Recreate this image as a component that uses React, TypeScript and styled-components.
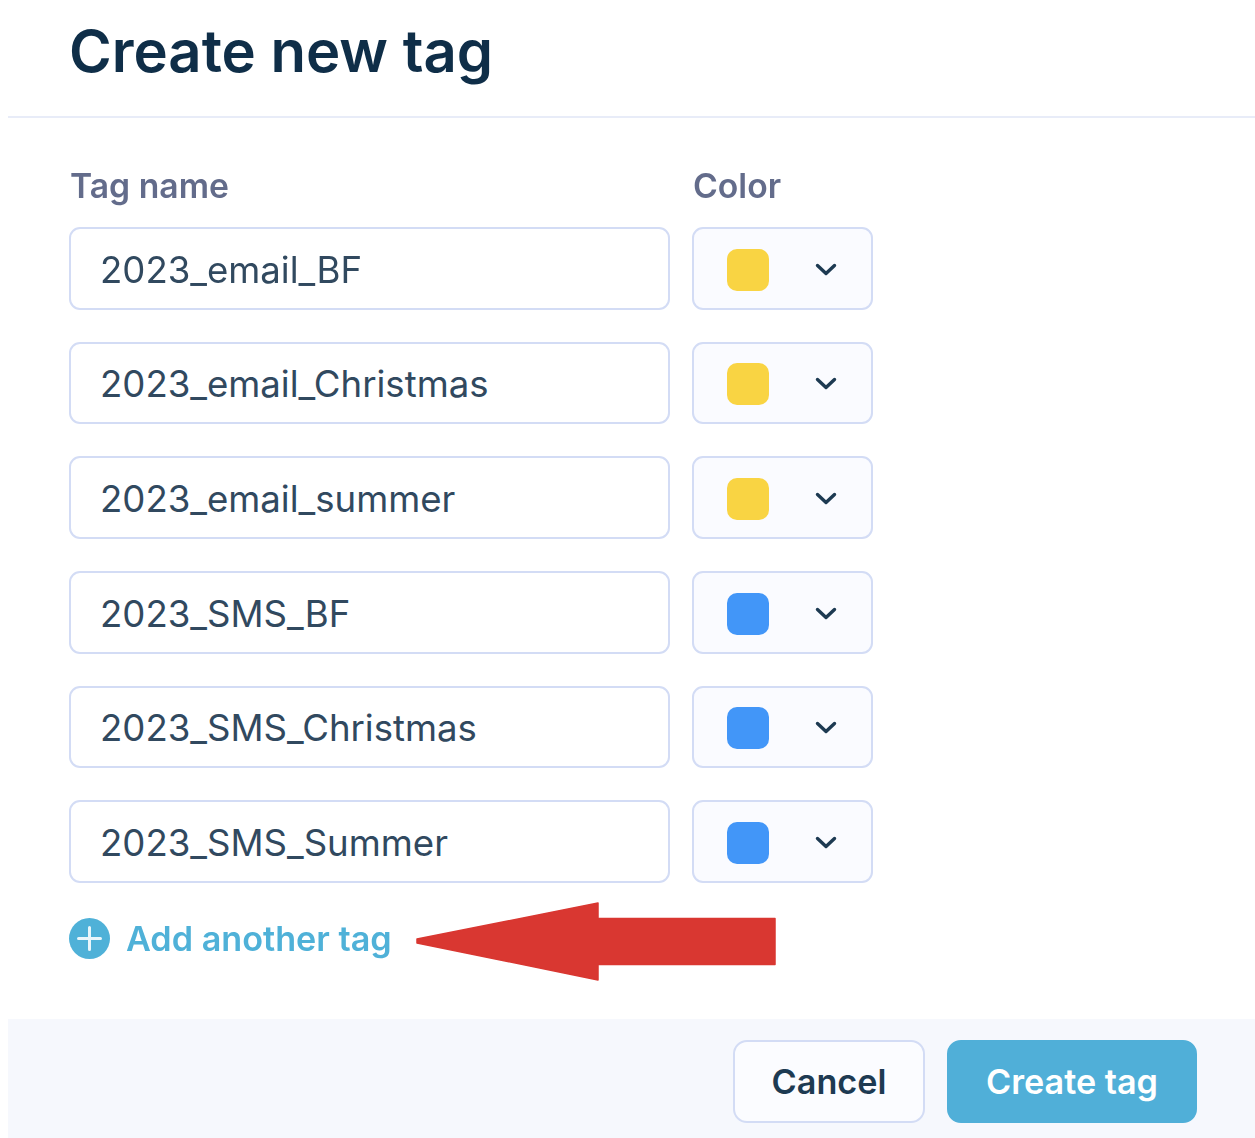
import React from "react";
import styled, { createGlobalStyle } from "styled-components";

const GlobalStyle = createGlobalStyle`
  html, body {
    margin: 0;
    padding: 0;
    background: #ffffff;
  }
  body {
    font-family: Inter, "Liberation Sans", sans-serif;
  }
`;

const Page = styled.div`
  width: 1255px;
  height: 1138px;
  padding-left: 8px;
  box-sizing: border-box;
  overflow: hidden;
  filter: blur(0.5px);
`;

const Header = styled.header`
  height: 118px;
  box-sizing: border-box;
  padding-left: 61px;
  border-bottom: 2px solid #e8ecf8;
  display: flex;
  align-items: center;
`;

const Title = styled.h1`
  margin: 0 0 14px;
  font-size: 58px;
  line-height: 68px;
  font-weight: 600;
  color: #0f2e48;
`;

const Body = styled.div`
  height: 901px;
  box-sizing: border-box;
  padding: 48px 0 0 61px;
`;

const Grid = styled.div`
  display: grid;
  grid-template-columns: 601px 181px;
  column-gap: 22px;
  row-gap: 32px;
  align-items: stretch;
`;

const Label = styled.div`
  margin: 0 0 -11px 1px;
  height: 40px;
  line-height: 40px;
  font-size: 33.7px;
  font-weight: 600;
  color: #636c8b;
`;

const TextBox = styled.div`
  height: 82.67px;
  box-sizing: border-box;
  border: 2px solid #d3dcf5;
  border-radius: 11px;
  padding: 3px 0 0 29px;
  display: flex;
  align-items: center;
  font-size: 36.6px;
  color: #31495f;
  background: #ffffff;
`;

const ColorSelect = styled.div`
  height: 82.67px;
  box-sizing: border-box;
  border: 2px solid #d3dcf5;
  border-radius: 11px;
  padding: 3px 0 0 33px;
  display: flex;
  align-items: center;
  background: #fafbff;
`;

const Swatch = styled.span<{ $color: string }>`
  width: 42px;
  height: 42px;
  border-radius: 10px;
  background: ${(p) => p.$color};
`;

const Chevron = styled.svg`
  width: 24px;
  height: 24px;
  margin-left: 45px;
  color: #1d3a52;
`;

const AddRow = styled.div`
  display: flex;
  align-items: center;
  height: 78px;
  margin-top: 17px;
`;

const AddIcon = styled.svg`
  width: 41px;
  height: 41px;
  flex: none;
`;

const AddText = styled.span`
  margin-left: 16px;
  font-size: 34.2px;
  font-weight: 600;
  color: #4fb1d8;
`;

const Arrow = styled.svg`
  width: 361px;
  height: 79px;
  margin: 5px 0 0 24px;
  flex: none;
`;

const Footer = styled.footer`
  height: 119px;
  box-sizing: border-box;
  background: #f6f8fd;
  padding: 21px 58px 0 0;
  display: flex;
  justify-content: flex-end;
  align-items: flex-start;
  gap: 22px;
`;

const Button = styled.button<{ $primary?: boolean }>`
  height: 83px;
  width: ${(p) => (p.$primary ? "250px" : "192px")};
  box-sizing: border-box;
  border-radius: 14px;
  border: 2px solid ${(p) => (p.$primary ? "#50afd8" : "#d3dcf5")};
  background: ${(p) => (p.$primary ? "#50afd8" : "#fbfcff")};
  color: ${(p) => (p.$primary ? "#ffffff" : "#1d3a52")};
  font-family: inherit;
  font-size: 34.2px;
  font-weight: 600;
  padding: 0;
`;

const tags = [
  { name: "2023_email_BF", color: "#f9d443" },
  { name: "2023_email_Christmas", color: "#f9d443" },
  { name: "2023_email_summer", color: "#f9d443" },
  { name: "2023_SMS_BF", color: "#4296f8" },
  { name: "2023_SMS_Christmas", color: "#4296f8" },
  { name: "2023_SMS_Summer", color: "#4296f8" },
];

export default function App() {
  return (
    <Page>
      <GlobalStyle />
      <Header>
        <Title>Create new tag</Title>
      </Header>
      <Body>
        <Grid>
          <Label>Tag name</Label>
          <Label>Color</Label>
          {tags.map((tag) => (
            <React.Fragment key={tag.name}>
              <TextBox>{tag.name}</TextBox>
              <ColorSelect>
                <Swatch $color={tag.color} />
                <Chevron viewBox="0 0 24 24" fill="none">
                  <path d="M3.500 7.500 12 15.500l8.500-8" stroke="currentColor" strokeWidth="3.400" strokeLinecap="round" strokeLinejoin="round" />
                </Chevron>
              </ColorSelect>
            </React.Fragment>
          ))}
        </Grid>
        <AddRow>
          <AddIcon viewBox="0 0 41 41">
            <circle cx="20.500" cy="20.500" r="20.500" fill="#4fb1d8" />
            <path d="M20.500 9.500v22M9.500 20.500h22" stroke="#eaf6fb" strokeWidth="3" strokeLinecap="round" />
          </AddIcon>
          <AddText>Add another tag</AddText>
          <Arrow viewBox="0 0 361 79">
            <path d="M1 37 182 1v15.500h177v46H182V78L1 41z" fill="#d93731" stroke="#d93731" strokeWidth="1.500" strokeLinejoin="round" />
          </Arrow>
        </AddRow>
      </Body>
      <Footer>
        <Button>Cancel</Button>
        <Button $primary>Create tag</Button>
      </Footer>
    </Page>
  );
}
